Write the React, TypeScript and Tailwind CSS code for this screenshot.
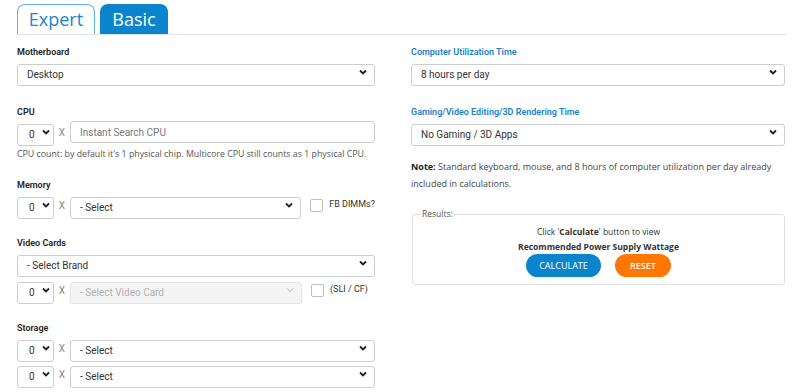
import { ReactNode } from "react";

const Chevron = ({ muted = false, small = false }: { muted?: boolean; small?: boolean }) => (
    <svg
        width="8"
        height="6"
        viewBox="0 0 8 6"
        className={`pointer-events-none absolute top-1/2 -translate-y-1/2 ${small ? "right-[4px]" : "right-[8px]"}`}
    >
        <path
            d="M1 1.5 L4 4.5 L7 1.5"
            fill="none"
            stroke={muted ? "#b5b5b5" : "#222"}
            strokeWidth={muted ? 1 : 1.8}
        />
    </svg>
);

function Select({
    value,
    className = "",
    disabled = false,
    small = false,
}: {
    value: string;
    className?: string;
    disabled?: boolean;
    small?: boolean;
}) {
    return (
        <div className={`relative h-[22px] ${className}`}>
            <select
                disabled={disabled}
                defaultValue={value}
                className={`h-full w-full appearance-none rounded-[3px] border text-[10px] outline-none ${
                    small ? "pl-[11px] pr-0" : "pl-[9px] pr-6"
                } ${
                    disabled
                        ? "border-[#e3e3e3] bg-[#f4f4f4] text-[#b0b0b0]"
                        : "border-[#cdcdcd] bg-white text-[#333]"
                }`}
            >
                <option>{value}</option>
            </select>
            <Chevron muted={disabled} small={small} />
        </div>
    );
}

const Count = () => <Select value="0" small className="w-[37px] shrink-0" />;

const Times = () => <span className="w-[16px] shrink-0 text-center text-[10px] text-[#8a8a8a]">X</span>;

function Check({ label }: { label: string }) {
    return (
        <label className="ml-[9px] flex items-center gap-[6px] whitespace-nowrap text-[9px] text-[#333]">
            <span className="h-[13px] w-[13px] shrink-0 rounded-[2px] border border-[#bdbdbd] bg-white" />
            {label}
        </label>
    );
}

function Label({ children, blue = false, className = "" }: { children: ReactNode; blue?: boolean; className?: string }) {
    return (
        <div
            className={`h-[12px] text-[9px] font-semibold leading-[12px] ${blue ? "text-[#1a7fcc]" : "text-[#222]"} ${className}`}
        >
            {children}
        </div>
    );
}

export default function App() {
    return (
        <div className="h-[392px] w-[800px] overflow-hidden bg-white pl-[17px] font-['Roboto',sans-serif]">
            {/* tabs */}
            <div className="flex w-[770px] gap-[5px] border-b border-[#e6e6e6] pt-[4px] font-['Open_Sans',sans-serif]">
                <div className="flex h-[30px] w-[78px] items-center justify-center rounded-t-[8px] border border-b-0 border-[#62b1e6] bg-white text-[18px] text-[#1a86cc]">
                    Expert
                </div>
                <div className="flex h-[30px] w-[68px] items-center justify-center rounded-t-[8px] bg-[#0a84cc] text-[18px] text-white">
                    Basic
                </div>
            </div>

            <div className="grid grid-cols-[358px_374px] gap-[36px]">
                {/* left column */}
                <div className="flex flex-col">
                    <Label className="mt-[11px]">Motherboard</Label>
                    <Select value="Desktop" className="mt-[3px]" />

                    <Label className="mt-[23px]">CPU</Label>
                    <div className="mt-[3px] flex h-[22px] items-center">
                        <Count />
                        <Times />
                        <input
                            placeholder="Instant Search CPU"
                            className="h-[22px] flex-1 rounded-[3px] border border-[#cdcdcd] px-[9px] text-[10px] outline-none placeholder:text-[#7a7a7a]"
                        />
                    </div>
                    <p className="mt-[5px] h-[12px] whitespace-nowrap font-['Open_Sans',sans-serif] text-[8.8px] leading-[12px] text-[#555]">
                        CPU count: by default it's 1 physical chip. Multicore CPU still counts as 1 physical CPU.
                    </p>

                    <Label className="mt-[19px]">Memory</Label>
                    <div className="mt-[3px] flex h-[22px] items-center">
                        <Count />
                        <Times />
                        <Select value="- Select" className="w-[232px]" />
                        <Check label="FB DIMMs?" />
                    </div>

                    <Label className="mt-[21px]">Video Cards</Label>
                    <Select value="- Select Brand" className="mt-[3px]" />
                    <div className="mt-[5px] flex h-[22px] items-center">
                        <Count />
                        <Times />
                        <Select value="- Select Video Card" className="w-[232px]" disabled />
                        <Check label="(SLI / CF)" />
                    </div>

                    <Label className="mt-[21px]">Storage</Label>
                    <div className="mt-[3px] flex h-[22px] items-center">
                        <Count />
                        <Times />
                        <Select value="- Select" className="flex-1" />
                    </div>
                    <div className="mt-[4px] flex h-[22px] items-center">
                        <Count />
                        <Times />
                        <Select value="- Select" className="flex-1" />
                    </div>
                </div>

                {/* right column */}
                <div className="flex flex-col">
                    <Label blue className="mt-[11px]">Computer Utilization Time</Label>
                    <Select value="8 hours per day" className="mt-[3px]" />

                    <Label blue className="mt-[23px]">Gaming/Video Editing/3D Rendering Time</Label>
                    <Select value="No Gaming / 3D Apps" className="mt-[3px]" />

                    <p className="mt-[15px] font-['Open_Sans',sans-serif] text-[9px] leading-[17px] text-[#444]">
                        <b className="font-bold text-[#222]">Note:</b> Standard keyboard, mouse, and 8 hours of computer utilization per
                        day already included in calculations.
                    </p>

                    <fieldset className="mt-[17px] ml-[1px] h-[76px] rounded-[3px] border border-[#e0e0e0] px-[8px] pb-[8px] font-['Open_Sans',sans-serif] text-[#333]">
                        <legend className="px-[1px] text-[8.5px] leading-[10px] text-[#555]">Results:</legend>
                        <div className="flex flex-col items-center">
                            <div className="mt-[5px] text-[8.5px] leading-[15px]">
                                Click '<b className="font-bold">Calculate</b>' button to view
                            </div>
                            <div className="text-[8.5px] font-bold leading-[15px]">Recommended Power Supply Wattage</div>
                            <div className="mt-[0px] flex gap-[14px]">
                                <button className="h-[23px] w-[75px] rounded-full bg-[#0a84cc] text-[9px] text-white">
                                    CALCULATE
                                </button>
                                <button className="h-[23px] w-[56px] rounded-full bg-[#ff7600] text-[9px] font-semibold text-white">
                                    RESET
                                </button>
                            </div>
                        </div>
                    </fieldset>
                </div>
            </div>
        </div>
    );
}
